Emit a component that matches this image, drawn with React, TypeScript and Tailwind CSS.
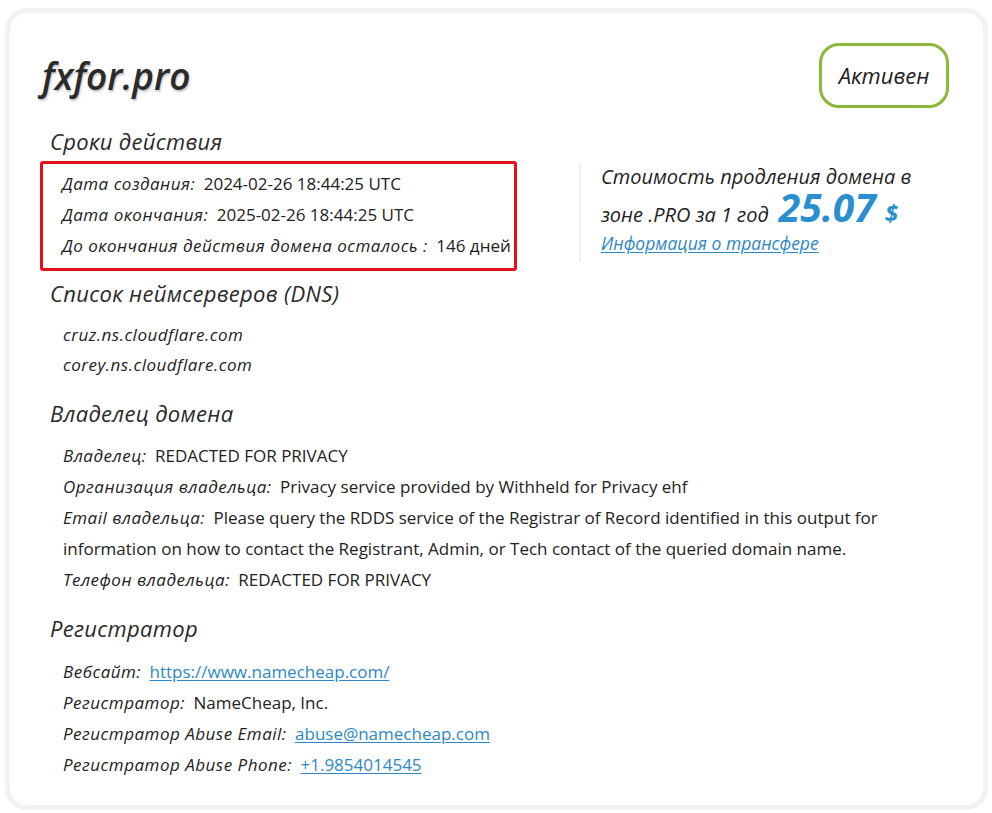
import React from "react";

const owner = [
  { label: "Владелец:", value: "REDACTED FOR PRIVACY" },
  { label: "Организация владельца:", value: "Privacy service provided by Withheld for Privacy ehf" },
];

const registrar = [
  { label: "Вебсайт:", value: "https://www.namecheap.com/", link: true },
  { label: "Регистратор:", value: "NameCheap, Inc." },
  { label: "Регистратор Abuse Email:", value: "abuse@namecheap.com", link: true },
  { label: "Регистратор Abuse Phone:", value: "+1.9854014545", link: true },
];

function Row({ label, value, link }: { label: string; value: string; link?: boolean }) {
  return (
    <div className="leading-[31px]">
      <span className="mr-[4px] italic tracking-[0.5px]">{label}</span>{" "}
      {link ? (
        <a href="#" className="text-[#2c88c6] underline underline-offset-2">
          {value}
        </a>
      ) : (
        <span>{value}</span>
      )}
    </div>
  );
}

function Heading({ children, className = "" }: { children: React.ReactNode; className?: string }) {
  return (
    <h2 className={`ml-[8px] text-[22px] italic leading-[30px] tracking-[0.3px] text-[#2a2a2a] ${className}`}>
      {children}
    </h2>
  );
}

export default function App() {
  return (
    <div className="min-h-[813px] bg-white pt-[8px] pl-[5px] font-['Open_Sans',sans-serif] text-[17px] text-[#222]">
      <div className="w-[983px] h-[802px] rounded-[22px] border-[5px] border-[#f2f2f2] bg-white pt-[30px] pl-[32px] pr-[34px]">
        {/* Header */}
        <div className="flex items-center justify-between">
          <h1 className="text-[37px] font-semibold italic leading-[44px] text-[#2b2b2b] [text-shadow:1px_2px_2px_rgba(0,0,0,0.22)]">
            fxfor.pro
          </h1>
          <div className="flex h-[65px] w-[130px] items-center justify-center rounded-[20px] border-[3px] border-[#8cb83a] text-[22px] italic text-[#222]">
            Активен
          </div>
        </div>

        {/* Terms + price */}
        <Heading className="mt-[18px]">Сроки действия</Heading>
        <div className="mt-[5px] flex">
          <div className="w-[537px]">
            <div className="-ml-[2px] w-[477px] rounded-[3px] border-[3px] border-[#e3101c] pt-[4px] pb-[7px] pl-[19px]">
              <Row label="Дата создания:" value="2024-02-26 18:44:25 UTC" />
              <Row label="Дата окончания:" value="2025-02-26 18:44:25 UTC" />
              <Row label="До окончания действия домена осталось :" value="146 дней" />
            </div>
          </div>
          <div className="mt-[2px] h-[99px] border-l-2 border-[#f0f0f0] pl-[20px] text-[20px] italic text-[#222]">
            <div className="h-[28px] leading-[28px]">Стоимость продления домена в</div>
            <div className="flex h-[32px] items-baseline">
              <span className="leading-[32px]">зоне .PRO за 1 год</span>
              <span className="ml-[10px] text-[39px] font-bold leading-[32px] text-[#2a8fd0]">25.07</span>
              <span className="ml-[9px] text-[24px] font-bold leading-[32px] text-[#2a8fd0]">$</span>
            </div>
            <a href="#" className="mt-[6px] block text-[17.5px] leading-[28px] text-[#2c88c6] underline underline-offset-2">
              Информация о трансфере
            </a>
          </div>
        </div>

        {/* DNS */}
        <Heading className="mt-[7px]">Список неймсерверов (DNS)</Heading>
        <div className="mt-[12px] pl-[21px] italic leading-[30px] tracking-[0.5px]">
          <div>cruz.ns.cloudflare.com</div>
          <div>corey.ns.cloudflare.com</div>
        </div>

        {/* Owner */}
        <Heading className="mt-[18px]">Владелец домена</Heading>
        <div className="mt-[12px] pl-[21px]">
          {owner.map((r) => (
            <Row key={r.label} label={r.label} value={r.value} />
          ))}
          <div className="leading-[31px]">
            <span className="mr-[4px] italic tracking-[0.5px]">Email владельца:</span>{" "}
            Please query the RDDS service of the Registrar of Record identified in this output for
            <br />
            information on how to contact the Registrant, Admin, or Tech contact of the queried domain name.
          </div>
          <Row label="Телефон владельца:" value="REDACTED FOR PRIVACY" />
        </div>

        {/* Registrar */}
        <Heading className="mt-[18px]">Регистратор</Heading>
        <div className="mt-[13px] pl-[21px]">
          {registrar.map((r) => (
            <Row key={r.label} label={r.label} value={r.value} link={r.link} />
          ))}
        </div>
      </div>
    </div>
  );
}
